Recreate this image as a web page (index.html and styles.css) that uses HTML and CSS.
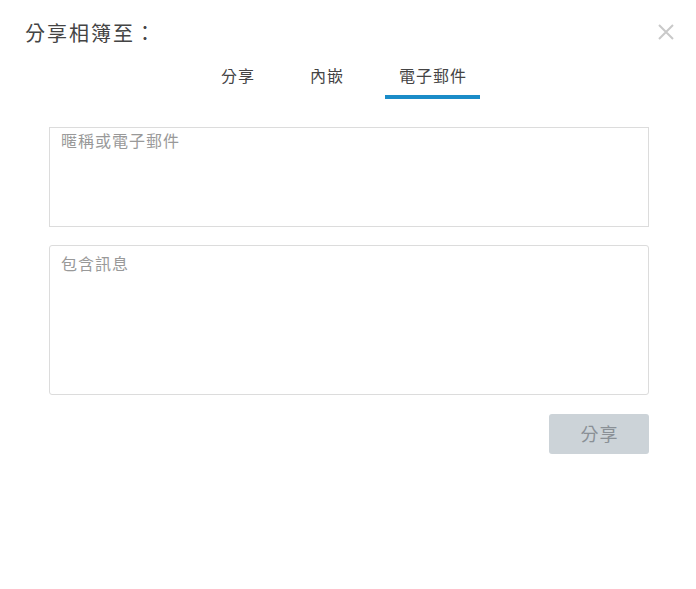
FILE: index.html
```html
<!DOCTYPE html>
<html lang="zh-Hant">
<head>
<meta charset="utf-8">
<link rel="stylesheet" href="styles.css">
</head>
<body>
<div class="dialog">
  <div class="header">
    <h1 class="title">分享相簿至：</h1>
    <button class="close" aria-label="關閉">
      <svg width="16" height="16" viewBox="0 0 16 16"><path d="M1 1 L15 15 M15 1 L1 15" stroke="#c9c9c9" stroke-width="2" fill="none"/></svg>
    </button>
  </div>
  <div class="tabs">
    <div class="tab">分享</div>
    <div class="tab">內嵌</div>
    <div class="tab active">電子郵件</div>
  </div>
  <div class="form">
    <div class="field field-to">暱稱或電子郵件</div>
    <div class="field field-msg">包含訊息</div>
    <div class="actions">
      <button class="share-btn">分享</button>
    </div>
  </div>
</div>
</body>
</html>
```
FILE: styles.css
```css
html, body {
  margin: 0;
  padding: 0;
  background: #fff;
}
body {
  font-family: "Noto Sans CJK TC", "Noto Sans", sans-serif;
  color: #444;
}
.dialog {
  width: 696px;
  height: 589px;
  box-sizing: border-box;
}
.header {
  display: flex;
  justify-content: space-between;
  align-items: flex-start;
  padding: 20px 22px 0 25px;
}
.title {
  margin: 0;
  font-size: 20px;
  font-weight: 400;
  line-height: 26px;
  color: #444;
  letter-spacing: 2px;
}
.close {
  border: 0;
  background: none;
  padding: 0;
  margin-top: 4px;
  width: 16px;
  height: 16px;
  display: block;
}
.close svg { display: block; }
.tabs {
  display: flex;
  justify-content: center;
  padding-right: 9px;
  margin-top: 18px;
}
.tab {
  font-size: 16px;
  line-height: 22px;
  letter-spacing: 1px;
  padding: 0 13px 9px 14px;
  margin: 0 14px;
  color: #444;
  border-bottom: 4px solid transparent;
}
.tab.active {
  border-bottom-color: #1a8cc8;
}
.form {
  padding: 28px 47px 0 49px;
  display: flex;
  flex-direction: column;
}
.field {
  border: 1px solid #dcdcdc;
  color: #999;
  font-size: 16px;
  line-height: 22px;
  letter-spacing: 1px;
  padding: 1px 11px;
  box-sizing: border-box;
}
.field-to {
  height: 100px;
}
.field-msg {
  height: 150px;
  margin-top: 18px;
  border-radius: 3px;
  padding-top: 6px;
}
.actions {
  display: flex;
  justify-content: flex-end;
  margin-top: 19px;
}
.share-btn {
  width: 100px;
  height: 40px;
  border: 0;
  border-radius: 3px;
  background: #ccd3d8;
  color: #8a9096;
  font-family: inherit;
  font-size: 18px;
  letter-spacing: 1px;
  padding: 0 0 3px 1px;
}
```
